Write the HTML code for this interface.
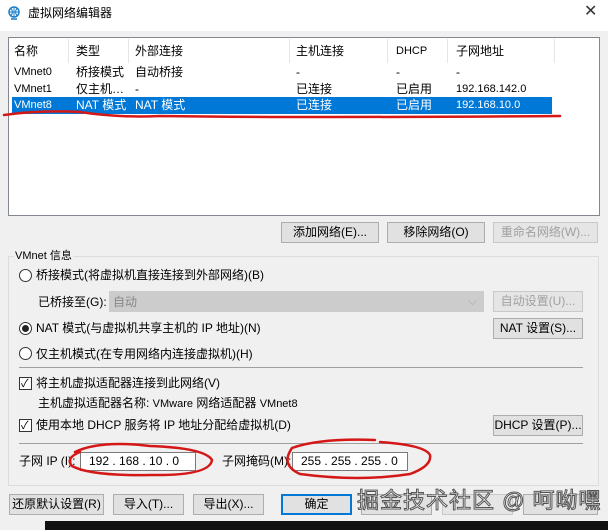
<!DOCTYPE html>
<html><head><meta charset="utf-8"><style>
*{box-sizing:border-box;margin:0;padding:0}
body{width:608px;height:530px;background:#f0f0f0;position:relative;overflow:hidden;font-family:"Liberation Sans","Noto Sans CJK SC",sans-serif;font-size:12px;color:#000;line-height:16px}
.a{position:absolute;white-space:nowrap;line-height:16px}
.btn{position:absolute;background:#e1e1e1;border:1px solid #adadad;text-align:center;line-height:19px;height:21px}
.dis{color:#a0a0a0;background:#e5e5e5;border-color:#c8c8c8}
.rad{position:absolute;width:13px;height:13px;border:1px solid #333;border-radius:50%;background:#fff}
.chk{position:absolute;width:13px;height:13px;border:1px solid #333;background:#fff}
.inp{position:absolute;background:#fff;border:1px solid #7a7a7a;height:19px;line-height:17px;padding-left:8px}
.hd{position:absolute;top:39px;height:24px;border-right:1px solid #e5e5e5}
</style></head><body>
<div class="a" style="left:0;top:0;width:608px;height:31px;background:#fff"></div>
<svg class="a" style="left:7px;top:6px" width="14" height="14" viewBox="0 0 14 14"><circle cx="7" cy="6" r="5" fill="none" stroke="#1a7fc9" stroke-width="1.5"/><path d="M2 6h10M7 1v10M4 2.5q3 3.5 0 7M10 2.5q-3 3.5 0 7" stroke="#1a7fc9" fill="none"/><path d="M4 13h6" stroke="#1a7fc9" stroke-width="1.5"/></svg>
<div class="a" style="left:28px;top:5px">虚拟网络编辑器</div>
<div class="a" style="left:584px;top:4px;font-size:16px;color:#333">✕</div>

<div class="a" style="left:8px;top:37px;width:592px;height:179px;background:#fff;border:1px solid #828790"></div>
<div class="hd" style="left:9px;width:60px"></div><div class="hd" style="left:69px;width:60px"></div><div class="hd" style="left:129px;width:161px"></div><div class="hd" style="left:290px;width:98px"></div><div class="hd" style="left:388px;width:60px"></div><div class="hd" style="left:448px;width:107px"></div>
<div class="a" style="left:14px;top:43px">名称</div><div class="a" style="left:76px;top:43px">类型</div><div class="a" style="left:135px;top:43px">外部连接</div><div class="a" style="left:296px;top:43px">主机连接</div><div class="a" style="left:396px;top:43px;font-size:11px">DHCP</div><div class="a" style="left:456px;top:43px">子网地址</div>
<div class="a" style="left:14px;top:64px;font-size:11px">VMnet0</div><div class="a" style="left:76px;top:64px">桥接模式</div><div class="a" style="left:135px;top:64px">自动桥接</div><div class="a" style="left:296px;top:64px">-</div><div class="a" style="left:396px;top:64px">-</div><div class="a" style="left:456px;top:64px">-</div>
<div class="a" style="left:14px;top:81px;font-size:11px">VMnet1</div><div class="a" style="left:76px;top:81px">仅主机…</div><div class="a" style="left:135px;top:81px">-</div><div class="a" style="left:296px;top:81px">已连接</div><div class="a" style="left:396px;top:81px">已启用</div><div class="a" style="left:456px;top:81px;font-size:11px">192.168.142.0</div>
<div class="a" style="left:12px;top:97px;width:540px;height:17px;background:#0078d7"></div>
<div class="a" style="left:14px;top:97px;font-size:11px;color:#fff">VMnet8</div><div class="a" style="left:76px;top:97px;color:#fff">NAT 模式</div><div class="a" style="left:135px;top:97px;color:#fff">NAT 模式</div><div class="a" style="left:296px;top:97px;color:#fff">已连接</div><div class="a" style="left:396px;top:97px;color:#fff">已启用</div><div class="a" style="left:456px;top:97px;font-size:11px;color:#fff">192.168.10.0</div>

<div class="btn" style="left:281px;top:222px;width:98px">添加网络(E)...</div>
<div class="btn" style="left:387px;top:222px;width:98px">移除网络(O)</div>
<div class="btn dis" style="left:493px;top:222px;width:105px">重命名网络(W)...</div>

<div class="a" style="left:8px;top:256px;width:591px;height:230px;border:1px solid #dcdcdc"></div>
<div class="a" style="left:14px;top:248px;background:#f0f0f0;padding:0 1px;font-size:11px">VMnet 信息</div>
<div class="rad" style="left:19px;top:269px"></div><div class="a" style="left:36px;top:267px">桥接模式(将虚拟机直接连接到外部网络)(B)</div>
<div class="a" style="left:38px;top:294px">已桥接至(G):</div>
<div class="a" style="left:109px;top:291px;width:375px;height:21px;background:#ccc;border:1px solid #ccc;color:#888;padding:2px 3px">自动<span style="position:absolute;right:6px;top:1px;color:#aaa">⌵</span></div>
<div class="btn dis" style="left:493px;top:291px;width:90px">自动设置(U)...</div>
<div class="rad" style="left:19px;top:322px"></div><div class="a" style="left:22px;top:325px;width:7px;height:7px;border-radius:50%;background:#222"></div>
<div class="a" style="left:36px;top:320px">NAT 模式(与虚拟机共享主机的 IP 地址)(N)</div>
<div class="btn" style="left:493px;top:318px;width:90px">NAT 设置(S)...</div>
<div class="rad" style="left:19px;top:347px"></div><div class="a" style="left:36px;top:346px">仅主机模式(在专用网络内连接虚拟机)(H)</div>
<div class="a" style="left:19px;top:367px;width:564px;height:1px;background:#a0a0a0"></div>
<div class="chk" style="left:19px;top:377px"></div><div class="a" style="left:21px;top:376px;font-size:11px">✓</div>
<div class="a" style="left:36px;top:375px">将主机虚拟适配器连接到此网络(V)</div>
<div class="a" style="left:38px;top:395px">主机虚拟适配器名称: <span style="font-size:11px">VMware</span> 网络适配器 <span style="font-size:11px">VMnet8</span></div>
<div class="chk" style="left:19px;top:419px"></div><div class="a" style="left:21px;top:418px;font-size:11px">✓</div>
<div class="a" style="left:36px;top:417px">使用本地 DHCP 服务将 IP 地址分配给虚拟机(D)</div>
<div class="btn" style="left:493px;top:415px;width:90px">DHCP 设置(P)...</div>
<div class="a" style="left:19px;top:443px;width:564px;height:1px;background:#a0a0a0"></div>
<div class="a" style="left:19px;top:453px">子网 IP (I):</div>
<div class="inp" style="left:80px;top:452px;width:116px">192 . 168 . 10 . 0</div>
<div class="a" style="left:222px;top:453px">子网掩码(M):</div>
<div class="inp" style="left:292px;top:452px;width:116px">255 . 255 . 255 . 0</div>

<div class="btn" style="left:9px;top:494px;width:95px">还原默认设置(R)</div>
<div class="btn" style="left:113px;top:494px;width:71px">导入(T)...</div>
<div class="btn" style="left:193px;top:494px;width:71px">导出(X)...</div>
<div class="btn" style="left:281px;top:494px;width:71px;border:2px solid #0078d7;line-height:17px">确定</div>
<div class="btn" style="left:361px;top:494px;width:71px"></div>
<div class="btn dis" style="left:442px;top:494px;width:71px"></div>
<div class="btn" style="left:523px;top:494px;width:75px"></div>
<div class="a" style="left:45px;top:521px;width:563px;height:9px;background:#111"></div>
<div class="a" style="left:357px;top:488px;font-size:22px;line-height:26px;color:#fff;-webkit-text-stroke:1px #555;letter-spacing:1px">掘金技术社区 @ 呵呦嘿</div>

<svg class="a" style="left:0;top:0" width="608" height="530"><g fill="none" stroke="#d41818" stroke-width="2.5" stroke-linecap="round">
<path d="M4 115 Q40 110 80 112 Q120 118 160 116 Q300 118 560 116"/>
<path d="M75 452 Q100 440 150 446 Q205 448 212 460 Q210 476 150 475 Q90 476 72 466 Q65 458 80 452"/>
<path d="M375 440 Q320 438 292 448 Q280 465 300 474 Q360 482 410 474 Q432 466 430 455 Q425 445 380 442"/>
</g></svg>
</body></html>
